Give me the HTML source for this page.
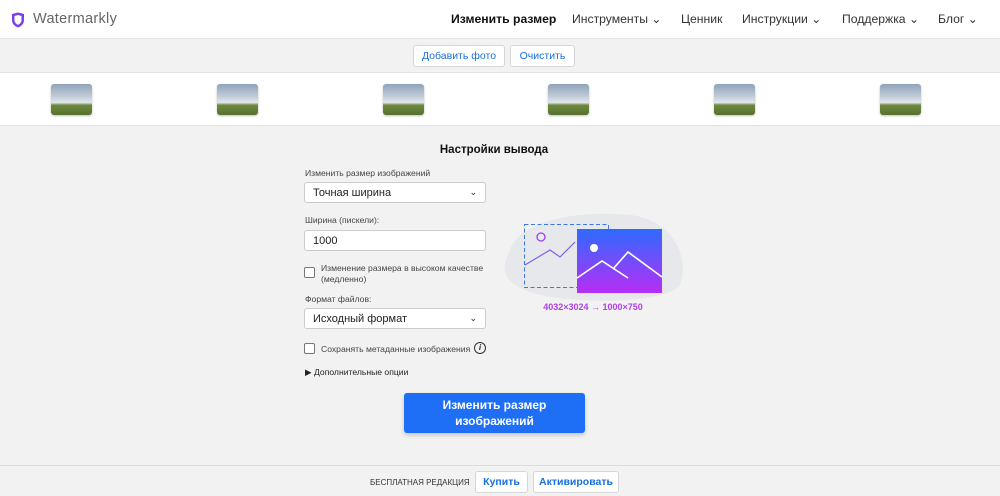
<!DOCTYPE html>
<html><head><meta charset="utf-8"><style>
*{box-sizing:border-box;margin:0;padding:0}
body{width:1000px;height:496px;overflow:hidden;font-family:"Liberation Sans",sans-serif;background:#f2f2f2;position:relative;color:#222}
.abs{position:absolute}
.hdr{left:0;top:0;width:1000px;height:39px;background:#fff;border-bottom:1px solid #e4e4e4}
.nav{top:12px;font-size:12.2px;color:#333;white-space:nowrap}
.btn{background:#fff;border:1px solid #d6d6d6;border-radius:3px;color:#1a6fe0;font-size:10.5px;text-align:center;white-space:nowrap}
.row{left:0;top:72px;width:1000px;height:54px;background:#fff;border-top:1px solid #e4e4e4;border-bottom:1px solid #e0e0e0}
.th{top:11px;width:41px;height:31px;border-radius:3px;background:linear-gradient(#8fa3b9 0%,#c0ccd8 40%,#e2e6ea 60%,#6d8a3e 68%,#57702f 100%);box-shadow:0 1px 2px rgba(0,0,0,.25)}
.lbl{font-size:8.6px;color:#444;white-space:nowrap}
.sel{background:#fff;border:1px solid #ccc;border-radius:3px;width:182px;height:21px;font-size:11px;padding:4px 8px;color:#222}
.cb{width:11px;height:11px;border:1px solid #777;border-radius:2px;background:#fff}
</style></head><body>
<div class="abs hdr"></div>
<svg class="abs" style="left:11px;top:12px" width="14" height="16" viewBox="0 0 14 16"><path d="M1 2 L7 0.5 L13 2 L13 8 C13 12 10 14.5 7 15.5 C4 14.5 1 12 1 8Z" fill="#7b3fe4"/><path d="M3.5 4 L7 3 L10.5 4 L10.5 8 C10.5 10.5 8.8 12 7 12.8 C5.2 12 3.5 10.5 3.5 8Z" fill="#fff"/></svg>
<div class="abs" style="left:33px;top:11px;font-size:14.5px;color:#666;letter-spacing:.3px">Watermarkly</div>
<div class="abs nav" style="left:451px;font-weight:bold;color:#111">Изменить размер</div>
<div class="abs nav" style="left:572px">Инструменты ⌄</div>
<div class="abs nav" style="left:681px">Ценник</div>
<div class="abs nav" style="left:742px">Инструкции ⌄</div>
<div class="abs nav" style="left:842px">Поддержка ⌄</div>
<div class="abs nav" style="left:938px">Блог ⌄</div>
<div class="abs btn" style="left:413px;top:45px;width:92px;height:22px;line-height:21px">Добавить фото</div>
<div class="abs btn" style="left:510px;top:45px;width:65px;height:22px;line-height:21px">Очистить</div>
<div class="abs row">
<div class="abs th" style="left:51px"></div><div class="abs th" style="left:217px"></div><div class="abs th" style="left:383px"></div><div class="abs th" style="left:548px"></div><div class="abs th" style="left:714px"></div><div class="abs th" style="left:880px"></div>
</div>
<div class="abs" style="left:0;top:144px;width:988px;text-align:center;font-size:11.5px;font-weight:bold;color:#111">Настройки вывода</div>
<div class="abs lbl" style="left:305px;top:168px">Изменить размер изображений</div>
<div class="abs sel" style="left:304px;top:182px">Точная ширина<span style="float:right;font-size:9px">⌄</span></div>
<div class="abs lbl" style="left:305px;top:215px">Ширина (пискели):</div>
<div class="abs sel" style="left:304px;top:230px">1000</div>
<div class="abs cb" style="left:304px;top:267px"></div>
<div class="abs lbl" style="left:321px;top:263px;line-height:11px">Изменение размера в высоком качестве<br>(медленно)</div>
<div class="abs lbl" style="left:305px;top:294px">Формат файлов:</div>
<div class="abs sel" style="left:304px;top:308px">Исходный формат<span style="float:right;font-size:9px">⌄</span></div>
<div class="abs cb" style="left:304px;top:343px"></div>
<div class="abs lbl" style="left:321px;top:344px">Сохранять метаданные изображения</div>
<div class="abs" style="left:474px;top:342px;width:12px;height:12px;border:1.3px solid #333;border-radius:50%;font-size:8px;text-align:center;line-height:10px;font-style:italic;font-weight:bold">i</div>
<div class="abs lbl" style="left:305px;top:367px;color:#222">▶ Дополнительные опции</div>
<svg class="abs" style="left:500px;top:210px" width="190" height="100" viewBox="0 0 190 100">
<path d="M10 40 C20 10 80 0 130 5 C175 10 190 50 180 75 C165 95 60 95 25 80 C0 70 2 55 10 40Z" fill="#e7e8ec"/>
<rect x="24.5" y="14.5" width="84" height="63" fill="none" stroke="#3d78e0" stroke-dasharray="4 2.5"/>
<circle cx="41" cy="27" r="4" fill="none" stroke="#9a40e8" stroke-width="1.3"/>
<path d="M25 55 L50 40 L60 47 L75 32" fill="none" stroke="#8060e8" stroke-width="1.2"/>
<defs><linearGradient id="g" x1="0" y1="0" x2="0" y2="1"><stop offset="0" stop-color="#2e6bff"/><stop offset="1" stop-color="#b82ef5"/></linearGradient></defs>
<rect x="77" y="19" width="85" height="64" fill="url(#g)"/>
<circle cx="94" cy="38" r="4" fill="#fff"/>
<path d="M77 68 L102 51 L128 68 M113 59 L128 42 L162 67" fill="none" stroke="#fff" stroke-width="1.6"/>
<text x="93" y="103" text-anchor="middle" font-family="Liberation Sans" font-size="9" font-weight="bold" fill="#b040e8" dy="-3">4032×3024 → 1000×750</text>
</svg>
<div class="abs" style="left:404px;top:393px;width:181px;height:40px;background:#1e6ff5;border-radius:3px;color:#fff;font-size:12px;font-weight:bold;text-align:center;line-height:16px;padding-top:4px;box-shadow:0 2px 4px rgba(0,0,0,.2)">Изменить размер<br>изображений</div>
<div class="abs" style="left:0;top:465px;width:1000px;height:31px;border-top:1px solid #ddd"></div>
<div class="abs" style="left:370px;top:478px;font-size:8px;color:#333;white-space:nowrap">БЕСПЛАТНАЯ РЕДАКЦИЯ</div>
<div class="abs btn" style="left:475px;top:471px;width:53px;height:22px;line-height:21px;font-weight:bold">Купить</div>
<div class="abs btn" style="left:533px;top:471px;width:86px;height:22px;line-height:21px;font-weight:bold">Активировать</div>
</body></html>
